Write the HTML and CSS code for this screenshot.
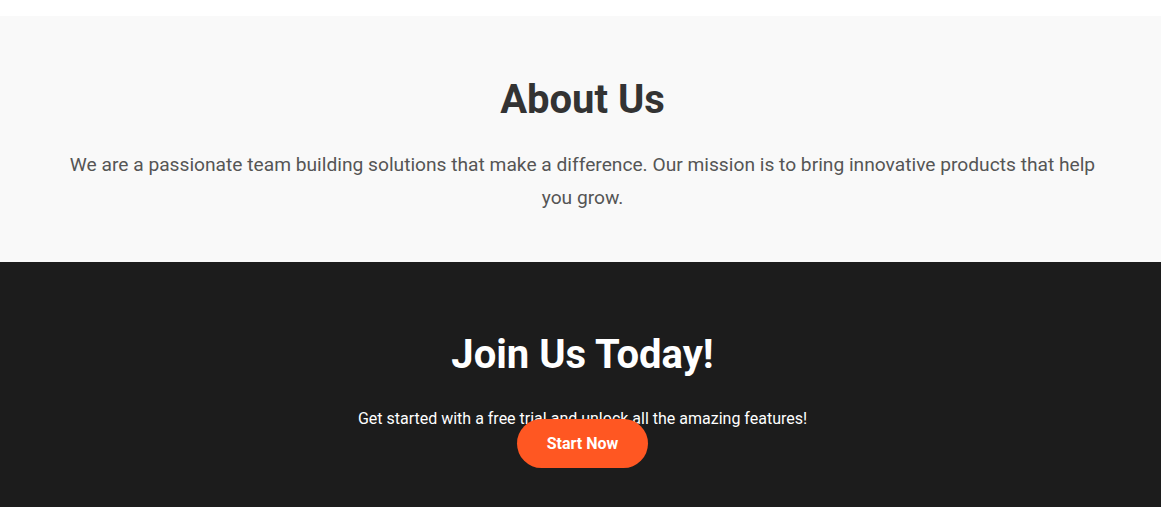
FILE: index.html
```html
<!DOCTYPE html>
<html lang="en">
<head>
<meta charset="utf-8">
<title>About Us</title>
<link rel="stylesheet" href="styles.css">
</head>
<body>
<div class="top-strip"></div>
<section class="about">
  <h2 class="about-title">About Us</h2>
  <p class="about-text">We are a passionate team building solutions that make a difference. Our mission is to bring innovative products that help you grow.</p>
</section>
<section class="cta">
  <h2 class="cta-title">Join Us Today!</h2>
  <p class="cta-text">Get started with a free trial and unlock all the amazing features!</p>
  <div class="cta-action"><a class="cta-button" href="#">Start Now</a></div>
</section>
</body>
</html>
```
FILE: styles.css
```css
* { box-sizing: border-box; }
html, body { margin: 0; padding: 0; }
body {
  font-family: Roboto, "Liberation Sans", Arial, sans-serif;
  background: #ffffff;
}
.top-strip { height: 16px; background: #ffffff; }
.about {
  background: #f9f9f9;
  text-align: center;
  padding: 60px 60px 48px 64px;
}
.about-title {
  margin: 0 0 26px;
  font-size: 40px;
  font-weight: 700;
  color: #333333;
}
.about-text {
  margin: 0;
  font-size: 19.2px;
  line-height: 1.7;
  color: #555555;
}
.cta {
  background: #1c1c1c;
  color: #ffffff;
  text-align: center;
  padding: 69px 20px 60px 24px;
}
.cta-title {
  margin: 0 0 28px;
  font-size: 40px;
  font-weight: 700;
  color: #ffffff;
}
.cta-text {
  margin: 0;
  font-size: 16px;
  line-height: 25.6px;
}
.cta-action { line-height: 23.6px; font-size: 16px; }
.cta-button {
  background: #ff5722;
  color: #ffffff;
  text-decoration: none;
  font-weight: 700;
  padding: 15px 30px;
  border-radius: 25px;
}
```
